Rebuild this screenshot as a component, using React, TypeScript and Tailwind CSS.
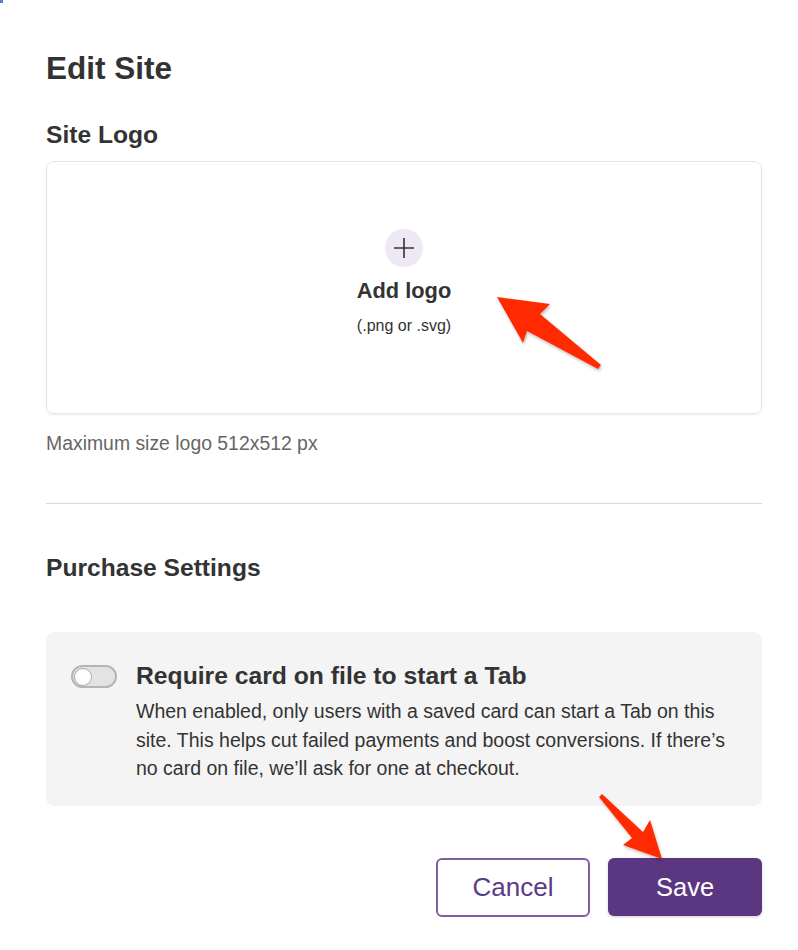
import React from 'react';

function Toggle() {
  return (
    <div className="w-[46px] h-[23px] shrink-0 rounded-full bg-[#e3e3e3] border-2 border-[#b5b5b5] flex items-center px-[1px]">
      <div className="w-[18px] h-[18px] rounded-full bg-white border border-[#aaaaaa]" />
    </div>
  );
}

// red annotation arrows drawn over the page
function Arrows() {
  return (
    <svg className="absolute left-0 top-0 pointer-events-none" width="798" height="950" viewBox="0 0 798 950">
      <defs>
        <filter id="arrowShadow" x="-20%" y="-20%" width="140%" height="140%">
          <feDropShadow dx="1" dy="2" stdDeviation="1.5" floodColor="#000" floodOpacity="0.25" />
        </filter>
      </defs>
      <polygon
        points="497,297 550,304 540,314 601,365 598,369 527,331 523,343"
        fill="#ff2a00"
        filter="url(#arrowShadow)"
      />
      <polygon
        points="599,797 602,794 643,832 650,820 662,859 623,845 632,838"
        fill="#ff2a00"
        filter="url(#arrowShadow)"
      />
    </svg>
  );
}

export default function App() {
  return (
    <div className="relative w-[798px] h-[950px] bg-white overflow-hidden font-['Liberation_Sans',Arial,sans-serif] text-[#333333]">
      {/* corner remnant of the window behind */}
      <div className="absolute left-0 top-0 w-[3px] h-[3px] bg-[#5b7fc0]" />

      <div className="flex flex-col pl-[46px] w-[762px] pt-[49px]">
        <h1 className="text-[31.5px] leading-[38px] font-bold">Edit Site</h1>

        <h2 className="mt-[33px] text-[24.6px] leading-[30px] font-bold">Site Logo</h2>

        {/* Logo upload card */}
        <div className="mt-[11px] h-[253px] rounded-lg border border-[#e6e6e6] shadow-[0_1px_3px_rgba(0,0,0,0.08)] flex flex-col items-center pt-[67px]">
          <div className="w-[38px] h-[38px] rounded-full bg-[#ede8f3] flex items-center justify-center">
            <svg width="22" height="22" viewBox="0 0 22 22">
              <path d="M11 1v20M1 11h20" stroke="#333" strokeWidth="1.6" />
            </svg>
          </div>
          <div className="mt-[11px] text-[21.8px] leading-[26px] font-bold">Add logo</div>
          <div className="mt-[12px] text-[16px] leading-[20px]">(.png or .svg)</div>
        </div>

        <p className="mt-[17px] text-[19.4px] leading-[24px] text-[#666666]">Maximum size logo 512x512 px</p>

        <div className="mt-[48px] h-px bg-[#d9d9d9]" />

        <h2 className="mt-[49px] text-[24.6px] leading-[30px] font-bold">Purchase Settings</h2>

        {/* Require card setting */}
        <div className="mt-[49px] h-[174px] rounded-lg bg-[#f4f4f4] flex items-start gap-[19px] pl-[25px] pr-[22px] pt-[29px]">
          <div className="pt-[4px]">
            <Toggle />
          </div>
          <div className="flex flex-col">
            <div className="text-[24.7px] leading-[30px] font-bold">Require card on file to start a Tab</div>
            <p className="mt-[6px] text-[19.5px] leading-[28.5px]">
              When enabled, only users with a saved card can start a Tab on this site. This helps cut failed payments and boost conversions. If there’s no card on file, we’ll ask for one at checkout.
            </p>
          </div>
        </div>

        <div className="mt-[52px] flex justify-end gap-[18px]">
          <button className="w-[154px] h-[59px] rounded-md border-2 border-[#7d5ea3] bg-white text-[#5b3a86] text-[26px]">
            Cancel
          </button>
          <button className="w-[154px] h-[58px] rounded-md bg-[#5b3681] text-white text-[25.5px] shadow-[0_1px_3px_rgba(0,0,0,0.2)]">
            Save
          </button>
        </div>
      </div>

      <Arrows />
    </div>
  );
}
